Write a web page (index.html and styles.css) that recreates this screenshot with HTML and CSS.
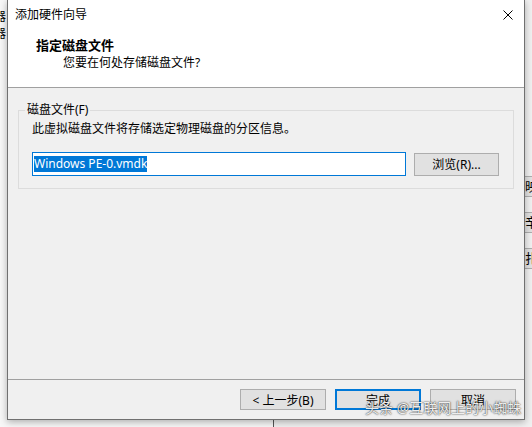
FILE: index.html
```html
<!DOCTYPE html>
<html lang="zh-CN">
<head>
    <meta charset="UTF-8">
    <title>添加硬件向导</title>
    <link rel="stylesheet" href="styles.css">
</head>
<body>
    <div class="screen">
        <!-- Application behind the wizard -->
        <div class="app">
            <div class="app-left">
                <div class="app-line">器</div>
                <div class="app-line">器</div>
            </div>
            <div class="app-right">
                <div class="app-btn">映射</div>
                <div class="app-btn">辛力</div>
                <div class="app-btn">扎入</div>
            </div>
        </div>

        <!-- Wizard dialog -->
        <div class="dialog">
            <div class="titlebar">
                <span class="title">添加硬件向导</span>
                <svg class="close" width="10" height="10" viewBox="0 0 10 10">
                    <path d="M0.5,0.5 L9.5,9.5 M9.5,0.5 L0.5,9.5" stroke="#000" stroke-width="1" fill="none"/>
                </svg>
            </div>
            <div class="header">
                <div class="heading">指定磁盘文件</div>
                <div class="subheading">您要在何处存储磁盘文件?</div>
            </div>
            <div class="content">
                <fieldset class="group">
                    <legend>磁盘文件(F)</legend>
                    <div class="desc">此虚拟磁盘文件将存储选定物理磁盘的分区信息。</div>
                    <div class="file-row">
                        <div class="field"><span class="sel">Windows PE-0.vmdk</span></div>
                        <div class="btn">浏览(R)...</div>
                    </div>
                </fieldset>
            </div>
            <div class="footer">
                <div class="btn wide">&lt; 上一步(B)</div>
                <div class="btn wide default">完成</div>
                <div class="btn wide">取消</div>
            </div>
        </div>

        <div class="watermark">头条 @互联网上的小蜘蛛</div>
    </div>
</body>
</html>
```

FILE: styles.css
```css
body {
    margin: 0;
    font-family: "Noto Sans", "Noto Sans CJK SC", sans-serif;
    font-size: 12px;
    color: #000;
}
.screen {
    position: relative;
    width: 532px;
    height: 427px;
    overflow: hidden;
    background: #f0f0f0;
}

/* Background application */
.app {
    display: grid;
    grid-template-columns: 273px 1fr;
    height: 100%;
}
.app-left {
    padding-top: 8px;
    margin-left: -6px;
    background: #f7f7f7;
}
.app-line {
    line-height: 17px;
}
.app-right {
    border-left: 1px solid #555;
    display: flex;
    flex-direction: column;
    align-items: flex-end;
    gap: 15px;
    padding-top: 176px;
    margin-right: -24px;
}
.app-btn {
    width: 30px;
    height: 19px;
    line-height: 19px;
    padding-left: 1px;
    border: 1px solid #adadad;
    background: #e1e1e1;
    font-size: 13px;
    overflow: hidden;
    white-space: nowrap;
}

/* Dialog window */
.dialog {
    position: absolute;
    left: 7px;
    top: 0;
    width: 518px;
    height: 420px;
    box-sizing: border-box;
    border: 1px solid #707070;
    border-top: none;
    background: #f0f0f0;
    display: flex;
    flex-direction: column;
    box-shadow: 0 2px 7px rgba(0, 0, 0, 0.3);
}
.titlebar {
    height: 30px;
    background: #fff;
    display: flex;
    align-items: center;
    justify-content: space-between;
    padding: 0 11px 0 7px;
}
.title {
    line-height: 30px;
}
.close {
    display: block;
}
.header {
    background: #fff;
    border-bottom: 1px solid #a0a0a0;
    padding-top: 7px;
    box-sizing: border-box;
    height: 58px;
}
.heading {
    font-weight: bold;
    font-size: 13px;
    line-height: 17px;
    padding-left: 28px;
}
.subheading {
    line-height: 17px;
    padding-left: 55px;
}
.content {
    flex: 1;
    padding: 14px 10px 0;
}
.group {
    margin: 0;
    border: 1px solid #dcdcdc;
    padding: 2px 14px 12px 13px;
}
.group legend {
    padding: 0 2px;
    margin-left: -7px;
    line-height: 16px;
}
.desc {
    line-height: 18px;
}
.file-row {
    display: flex;
    align-items: center;
    gap: 8px;
    margin-top: 14px;
}
.field {
    flex: 1;
    height: 24px;
    box-sizing: border-box;
    border: 1px solid #0078d7;
    background: #fff;
    display: flex;
    align-items: center;
    padding-left: 1px;
}
.sel {
    background: #0078d7;
    color: #fff;
    line-height: 16px;
    font-size: 12px;
}
.btn {
    width: 85px;
    height: 23px;
    box-sizing: border-box;
    border: 1px solid #adadad;
    background: #e1e1e1;
    display: flex;
    align-items: center;
    justify-content: center;
}

/* Bottom button bar */
.footer {
    border-top: 1px solid #a0a0a0;
    display: flex;
    justify-content: flex-end;
    gap: 9px;
    padding: 9px 8px 9px;
}
.btn.wide {
    width: 86px;
    height: 21px;
}
.btn.default {
    border-color: #0078d7;
    box-shadow: inset 0 0 0 1px #0078d7;
}

.watermark {
    position: absolute;
    left: 365px;
    top: 398px;
    font-size: 14px;
    line-height: 20px;
    color: rgba(255, 255, 255, 0.92);
    text-shadow: 0 0 2px rgba(0, 0, 0, 0.7), 0 0 1px rgba(0, 0, 0, 0.6);
    white-space: nowrap;
}
```
